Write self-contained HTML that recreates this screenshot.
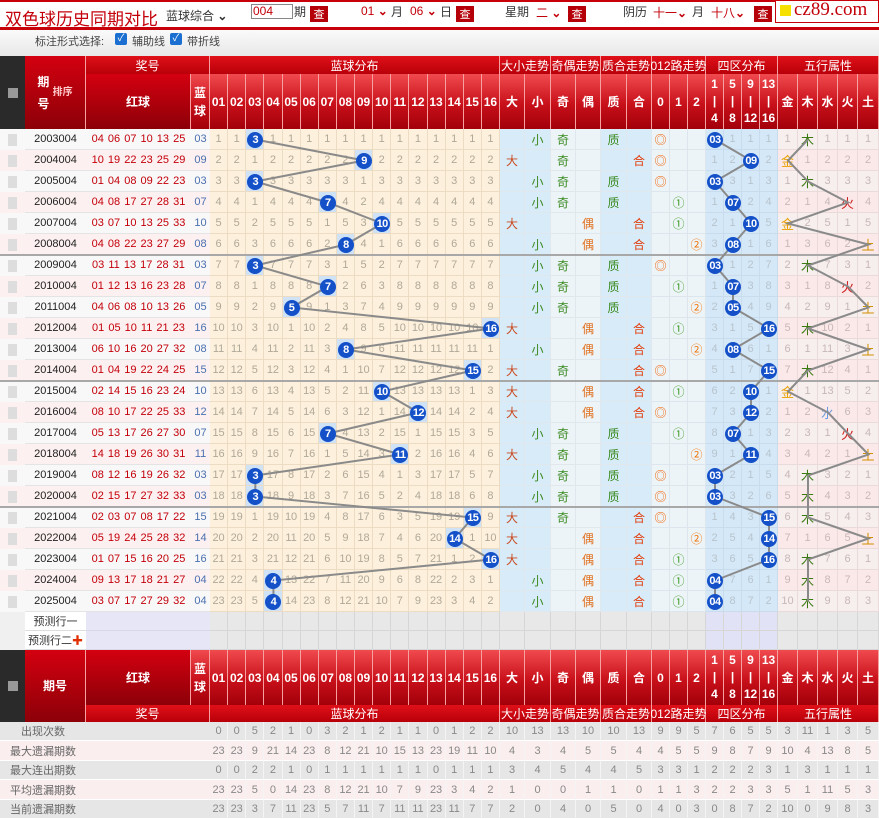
<!DOCTYPE html>
<html><head><meta charset="utf-8">
<style>
*{box-sizing:border-box;margin:0;padding:0}
body{width:879px;height:819px;overflow:hidden;background:#fff;font-family:"Liberation Sans","Noto Sans CJK SC",sans-serif;position:relative}
.a{position:absolute;display:flex;align-items:center;justify-content:center;white-space:nowrap}
.hd{color:#fff;font-weight:bold;font-size:12px;background:linear-gradient(#f04a4f,#c8101a 55%,#a2000a);border-right:1px solid #f7a0a0}
.gp{color:#fff;font-size:12px;background:linear-gradient(#e01018,#b8000a);border-right:1px solid #f7a0a0}
.btn{position:absolute;width:18px;height:16px;background:#b5000a;color:#fff;font-size:11px;display:flex;align-items:center;justify-content:center}
.t{position:absolute;font-size:12px;color:#333;top:5px}
.r{color:#c3000a}
.ball{position:absolute;width:16px;height:16px;border-radius:50%;background:#1450c8;color:#fff;font-size:11px;font-weight:bold;display:flex;align-items:center;justify-content:center;letter-spacing:-0.5px}
</style></head><body>
<div style="position:absolute;left:0;top:0;width:879px;height:30px;background:#fff;border-bottom:3px solid #c8000a"></div>
<div style="position:absolute;left:0;top:0;width:879px;height:2px;background:#c8000a"></div>
<div class="t" style="left:5px;top:5px;font-size:17px;color:#c3000a">双色球历史同期对比</div>
<div class="t" style="left:166px;top:7px">蓝球综合 <b>⌄</b></div>
<div style="position:absolute;left:251px;top:4px;width:42px;height:15px;border:1px solid #888;color:#c3000a;font-size:12px;padding-left:1px;line-height:13px">004</div>
<div class="t" style="left:294px;top:3px">期</div>
<div class="btn" style="left:310px;top:6px">查</div>
<div class="t r" style="left:361px;top:4px">01 <b>⌄</b></div><div class="t" style="left:391px;top:3px">月</div>
<div class="t r" style="left:410px;top:4px">06 <b>⌄</b></div><div class="t" style="left:440px;top:3px">日</div>
<div class="btn" style="left:456px;top:6px">查</div>
<div class="t" style="left:505px;top:3px">星期</div><div class="t r" style="left:536px;top:4px">二 <b>⌄</b></div>
<div class="btn" style="left:568px;top:6px">查</div>
<div class="t" style="left:623px;top:3px">阴历</div><div class="t r" style="left:653px;top:4px">十一<b>⌄</b></div><div class="t" style="left:692px;top:3px">月</div>
<div class="t r" style="left:711px;top:4px">十八<b>⌄</b></div>
<div class="btn" style="left:754px;top:6px">查</div>
<div style="position:absolute;left:775px;top:0;width:104px;height:23px;border:1px solid #c8000a;background:#fff"></div>
<div style="position:absolute;left:780px;top:5px;width:11px;height:11px;background:#f5e000"></div>
<div class="t" style="left:794px;top:-1px;font-family:'Liberation Serif',serif;font-size:19px;color:#c3000a">cz89.com</div>
<div style="position:absolute;left:0;top:30px;width:879px;height:26px;background:linear-gradient(#fafafa,#e8e8e8)"></div>
<div class="t" style="left:35px;top:33px;color:#444;font-size:11px">标注形式选择:</div>
<div style="position:absolute;left:115px;top:33px;width:12px;height:12px;background:#1a6fd0;border-radius:2px;color:#fff;font-size:10px;line-height:12px;text-align:center">✓</div>
<div class="t" style="left:132px;top:33px;color:#444;font-size:11px">辅助线</div>
<div style="position:absolute;left:170px;top:33px;width:12px;height:12px;background:#1a6fd0;border-radius:2px;color:#fff;font-size:10px;line-height:12px;text-align:center">✓</div>
<div class="t" style="left:187px;top:33px;color:#444;font-size:11px">带折线</div>
<div id="g"></div>
<script>
const g=document.getElementById('g');let H='';
function c(x1,x2,y1,y2,txt,cls,st){H+=`<div class="a ${cls||''}" style="left:${x1}px;top:${y1}px;width:${x2-x1}px;height:${y2-y1}px;${st||''}">${txt}</div>`;}
const X=[];for(let i=0;i<=16;i++)X.push(210+i*290/16);
[525,551,576,601,627,652,670,688,706,724,742,760,778,798,818,838,858,879].forEach(v=>X.push(v));
const colL=['01','02','03','04','05','06','07','08','09','10','11','12','13','14','15','16','大','小','奇','偶','质','合','0','1','2','1<br>|<br>4','5<br>|<br>8','9<br>|<br>12','13<br>|<br>16','金','木','水','火','土'];
const groups=[[86,210,'奖号'],[210,500,'蓝球分布'],[500,551,'大小走势'],[551,601,'奇偶走势'],[601,652,'质合走势'],[652,706,'012路走势'],[706,778,'四区分布'],[778,879,'五行属性']];
function header(yc1,yc2,yg1,yg2,top){
 const y1=Math.min(yc1,yg1),y2=Math.max(yc2,yg2);
 c(0,25,y1,y2,'<div style="width:10px;height:10px;background:#999;margin:3px"></div>','','background:#2a2a2a;flex-direction:column');
 c(25,86,y1,y2,top?'期<br>号&nbsp;<span style="font-size:10px;color:#fcc">排序</span>':'期号','hd','background:linear-gradient(#d40010,#8c0008);line-height:22px');
 groups.forEach(gr=>c(gr[0],gr[1],yg1,yg2,gr[2],'gp'));
 c(86,191,yc1,yc2,'红球','hd','background:linear-gradient(#d40010,#8c0008)');
 c(191,210,yc1,yc2,'蓝<br>球','hd','line-height:18px');
 for(let j=0;j<34;j++)c(X[j],X[j+1],yc1,yc2,colL[j],'hd',j>=25&&j<=28?'line-height:17px;text-align:center':'');
}
header(74,129,56,74,true);
const D=[['2003004','04 06 07 10 13 25',3],['2004004','10 19 22 23 25 29',9],['2005004','01 04 08 09 22 23',3],['2006004','04 08 17 27 28 31',7],['2007004','03 07 10 13 25 33',10],['2008004','04 08 22 23 27 29',8],['2009004','03 11 13 17 28 31',3],['2010004','01 12 13 16 23 28',7],['2011004','04 06 08 10 13 26',5],['2012004','01 05 10 11 21 23',16],['2013004','06 10 16 20 27 32',8],['2014004','01 04 19 22 24 25',15],['2015004','02 14 15 16 23 24',10],['2016004','08 10 17 22 25 33',12],['2017004','05 13 17 26 27 30',7],['2018004','14 18 19 26 30 31',11],['2019004','08 12 16 19 26 32',3],['2020004','02 15 17 27 32 33',3],['2021004','02 03 07 08 17 22',15],['2022004','05 19 24 25 28 32',14],['2023004','01 07 15 16 20 25',16],['2024004','09 13 17 18 21 27',4],['2025004','03 07 17 27 29 32',4]];
const WX=[1,0,1,3,0,4,1,3,4,1,4,1,0,2,3,4,1,1,1,4,1,1,1];
const WXc=['金','木','水','火','土'],WXcol=['#e8a000','#3a7a10','#6a9ae0','#d02020','#d09000'];
const mb=Array(16).fill(0),mq=Array(4).fill(0),mw=Array(5).fill(0);
const P=[1,2,3,5,7,11,13];
let lb=[],lq=[],lw=[],balls='';
D.forEach((d,i)=>{const y1=129+i*21,y2=y1+21,b=d[2];
 const rb=i%2?'#fdf0f0':'#f8f8f8';
 c(0,25,y1,y2,'<div style="width:9px;height:12px;background:#ddd"></div>','',`background:${rb}`);
 c(25,86,y1,y2,d[0],'',`background:${rb};font-size:11px;color:#222;border-bottom:1px solid #e4e4e4`);
 c(86,191,y1,y2,d[1],'',`background:${rb};font-size:11px;color:#c3000a;border-bottom:1px solid #e4e4e4;word-spacing:1px`);
 c(191,210,y1,y2,String(b).padStart(2,'0'),'',`background:${rb};font-size:11px;color:#4a70b0;border-bottom:1px solid #e4e4e4`);
 for(let j=0;j<16;j++){const hit=j==b-1;if(!hit)mb[j]++;else mb[j]=0;
  c(X[j],X[j+1],y1,y2,hit?'':mb[j],'',`background:${hit?'#cfe2f6':'#fdf0dc'};font-size:11px;color:#b0a898;border-right:1px solid #ecdcc4;border-bottom:1px solid #ecdcc4`);
  if(hit){const cx=(X[j]+X[j+1])/2,cy=y1+10.5;lb.push([cx,cy]);balls+=`<div class="ball" style="left:${cx-8}px;top:${cy-8}px">${b}</div>`;}}
 const tr=[[16,17,b>=9?0:1,['大','小'],['#c84a20','#3a8a20'],'#d8ebf8'],[18,19,b%2?0:1,['奇','偶'],['#3a8a20','#e07020'],'#edf4f8'],[20,21,P.includes(b)?0:1,['质','合'],['#3a8a20','#e04010'],'#d8ebf8']];
 tr.forEach(t=>{for(let k=0;k<2;k++)c(X[t[0]+k],X[t[0]+k+1],y1,y2,k==t[2]?t[3][k]:'','',`background:${t[5]};font-size:12px;color:${t[4][k]};border-right:1px solid #e0e8ee;border-bottom:1px solid #e0e8ee`)});
 const r=b%3;const sym=['◎','①','②'],sc=['#f06000','#3a9a20','#f07000'];
 for(let k=0;k<3;k++)c(X[22+k],X[23+k],y1,y2,k==r?sym[k]:'','',`background:#edf4f8;font-size:12px;color:${sc[k]};border-right:1px solid #dde6ec;border-bottom:1px solid #dde6ec`);
 const q=Math.floor((b-1)/4);
 for(let k=0;k<4;k++){const hit=k==q;if(!hit)mq[k]++;else mq[k]=0;
  c(X[25+k],X[26+k],y1,y2,hit?'':mq[k],'',`background:#d5e8f8;font-size:11px;color:#b8c4cc;border-right:1px solid #c8dcee;border-bottom:1px solid #c8dcee`);
  if(hit){const cx=(X[25+k]+X[26+k])/2,cy=y1+10.5;lq.push([cx,cy]);balls+=`<div class="ball" style="left:${cx-8}px;top:${cy-8}px">${String(b).padStart(2,'0')}</div>`;}}
 const w=WX[i];
 for(let k=0;k<5;k++){const hit=k==w;if(!hit)mw[k]++;else mw[k]=0;
  c(X[29+k],X[30+k],y1,y2,hit?WXc[k]:mw[k],'',`background:${i%2?'#fbe9e9':'#f7eeee'};font-size:${hit?13:11}px;color:${hit?WXcol[k]:'#c8b8b8'};border-right:1px solid #eadada;border-bottom:1px solid #eadada`);
  if(hit)lw.push([(X[29+k]+X[30+k])/2,y1+10.5]);}
});
[5,11,17].forEach(i=>{H+=`<div style="position:absolute;left:0;top:${129+(i+1)*21-1}px;width:879px;height:2px;background:#a8a8a8"></div>`});
let svg='<svg style="position:absolute;left:0;top:0" width="879" height="819">';
[lb,lq,lw].forEach(L=>{svg+=`<polyline points="${L.map(p=>p.join(',')).join(' ')}" fill="none" stroke="#8a8a8a" stroke-width="2"/>`});
svg+='</svg>';
[['预测行一',612,631],['预测行二 <span style="color:#e03000">✚</span>',631,650]].forEach(p=>{
 c(0,25,p[1],p[2],'','','background:#f0f0f0');
 c(25,86,p[1],p[2],p[0],'','background:#fff;font-size:11px;color:#333;border-bottom:1px solid #ddd');
 c(86,210,p[1],p[2],'','','background:#e6e6f6;border-bottom:1px solid #d8d8e8');
 for(let j=0;j<34;j++)c(X[j],X[j+1],p[1],p[2],'','',`background:${j>=25&&j<=28?'#e2e2f6':'#e8e8e8'};border-right:1px solid #d6d6d6;border-bottom:1px solid #d6d6d6`);
});
header(650,705,705,722,false);
const S=[['出现次数','0 0 5 2 1 0 3 2 1 2 1 1 0 1 2 2 10 13 13 10 10 13 9 9 5 7 6 5 5 3 11 1 3 5'],
['最大遗漏期数','23 23 9 21 14 23 8 12 21 10 15 13 23 19 11 10 4 3 4 5 5 4 4 5 5 9 8 7 9 10 4 13 8 5'],
['最大连出期数','0 0 2 2 1 0 1 1 1 1 1 1 0 1 1 1 3 4 5 4 4 5 3 3 1 2 2 2 3 1 3 1 1 1'],
['平均遗漏期数','23 23 5 0 14 23 8 12 21 10 7 9 23 3 4 2 1 0 0 1 1 0 1 1 3 2 2 3 3 5 1 11 5 3'],
['当前遗漏期数','23 23 3 7 11 23 5 7 11 7 11 11 23 11 7 7 2 0 4 0 5 0 4 0 3 0 8 7 2 10 0 9 8 3']];
S.forEach((s,i)=>{const y1=Math.round(722+i*19.4),y2=Math.round(722+(i+1)*19.4);const bg=i%2?'#fbeeee':'#e6e6e6';
 c(0,86,y1,y2,s[0],'',`background:${bg};font-size:11px;color:#666;border-bottom:1px solid #fff`);
 c(86,210,y1,y2,'','',`background:${bg};border-bottom:1px solid #fff`);
 s[1].split(' ').forEach((v,j)=>c(X[j],X[j+1],y1,y2,v,'',`background:${bg};font-size:11px;color:#888;border-right:1px solid #f4f4f4;border-bottom:1px solid #fff`));
});
g.innerHTML=H+svg+balls;
</script>
</body></html>
